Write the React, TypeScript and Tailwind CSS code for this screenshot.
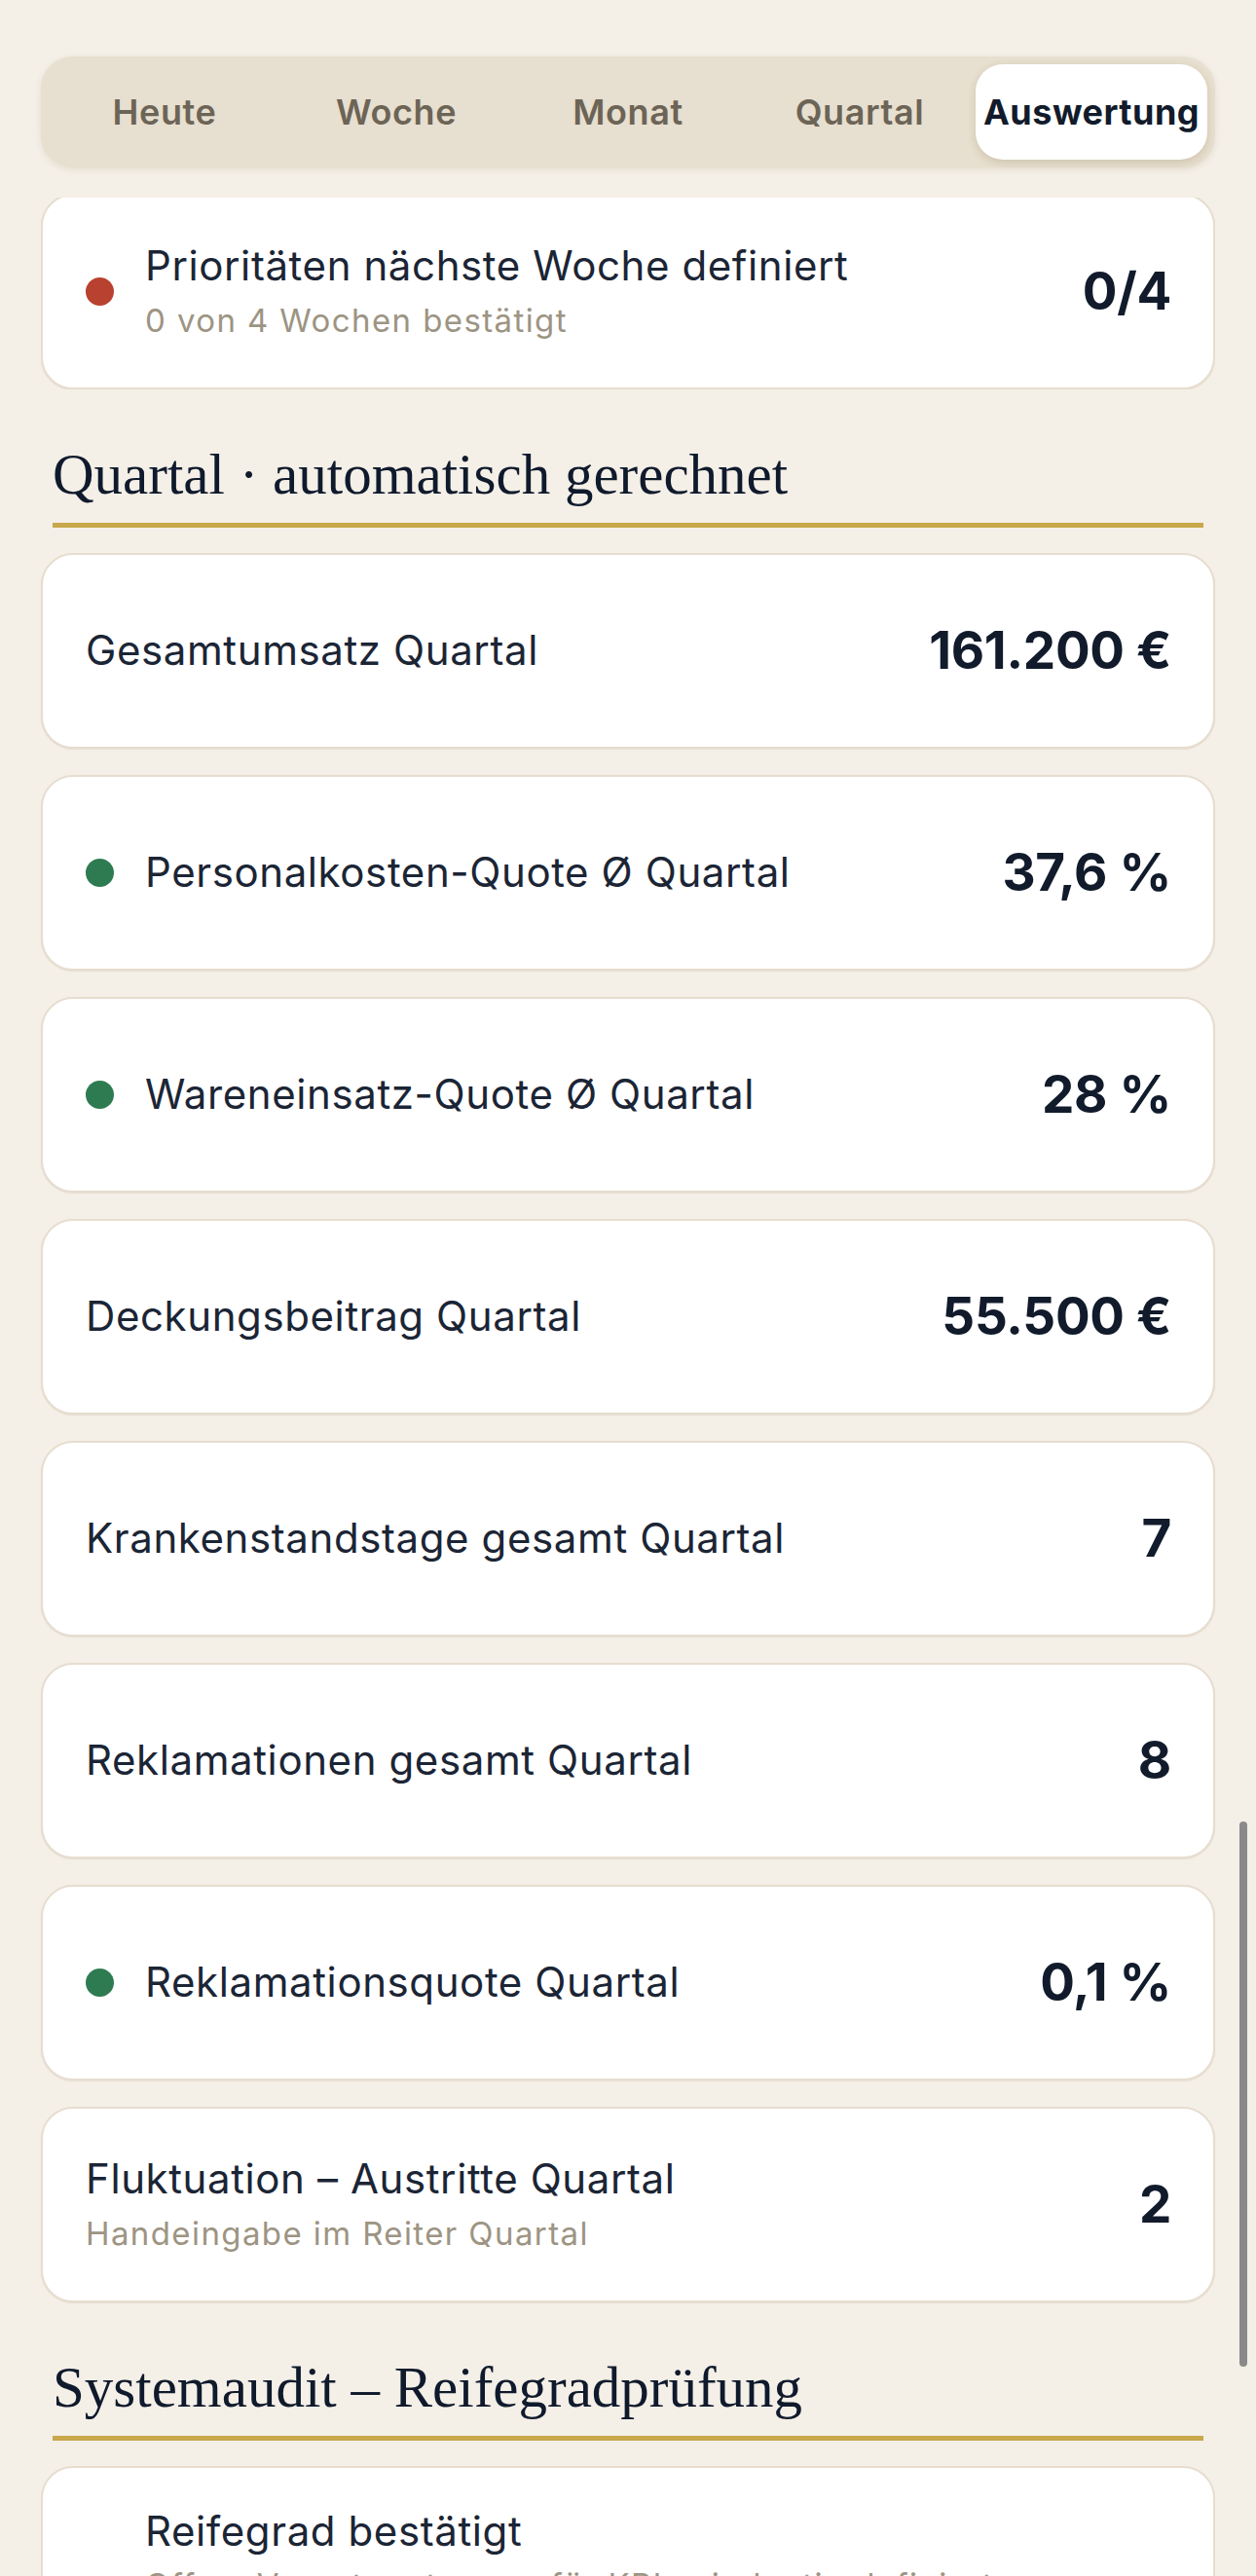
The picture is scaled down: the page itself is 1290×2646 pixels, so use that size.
import React from "react";

type Kpi = {
  label: string;
  value: string;
  hint?: string;
  status?: "good" | "bad";
};

const tabs = ["Heute", "Woche", "Monat", "Quartal", "Auswertung"];

const quarterKpis: Kpi[] = [
  { label: "Gesamtumsatz Quartal", value: "161.200 €" },
  { label: "Personalkosten-Quote Ø Quartal", value: "37,6 %", status: "good" },
  { label: "Wareneinsatz-Quote Ø Quartal", value: "28 %", status: "good" },
  { label: "Deckungsbeitrag Quartal", value: "55.500 €" },
  { label: "Krankenstandstage gesamt Quartal", value: "7" },
  { label: "Reklamationen gesamt Quartal", value: "8" },
  { label: "Reklamationsquote Quartal", value: "0,1 %", status: "good" },
  {
    label: "Fluktuation – Austritte Quartal",
    value: "2",
    hint: "Handeingabe im Reiter Quartal",
  },
];

const sans = "font-['Inter','Noto_Sans',sans-serif]";

function StatusDot({ status }: { status?: "good" | "bad" }) {
  if (!status) return null;
  return (
    <span
      className={
        status === "good"
          ? "h-[29px] w-[29px] shrink-0 rounded-full bg-[#2e7b52]"
          : "h-[29px] w-[29px] shrink-0 rounded-full bg-[#b9412f]"
      }
    />
  );
}

function KpiCard({ kpi }: { kpi: Kpi }) {
  return (
    <div className="flex min-h-[201px] items-center justify-between gap-6 rounded-[33px] border-2 border-[#e6ddcf] bg-white pl-[44px] pr-[43px] shadow-[0_1px_1px_rgba(170,150,110,0.18)]">
      <div className="flex items-center gap-[32px]">
        <StatusDot status={kpi.status} />
        <div>
          <p className="text-[42px] leading-[1.2] tracking-[0.6px] text-[#1b2535]">{kpi.label}</p>
          {kpi.hint && (
            <p className="mt-[9px] text-[33px] leading-[1.3] tracking-[1.4px] text-[#9d9483]">{kpi.hint}</p>
          )}
        </div>
      </div>
      <span className="text-[53px] font-bold leading-none tracking-[-0.3px] text-[#111b2b]">{kpi.value}</span>
    </div>
  );
}

function SectionHeading({ children }: { children: React.ReactNode }) {
  return (
    <div className="mx-[12px] mt-[57px] border-b-[5px] border-[#c9a74b] pb-[20px]">
      <h2 className="font-['Liberation_Serif','Times_New_Roman',serif] text-[59px] leading-[60px] text-[#0f1a2c]">
        {children}
      </h2>
    </div>
  );
}

export default function App() {
  return (
    <div className={`relative min-h-screen bg-[#f4efe7] ${sans}`}>
      <div className="px-[42px]">
        <header className="pb-[31px] pt-[58px]">
          <nav className="flex rounded-[33px] bg-[#e7dfcf] p-[8px] shadow-[0_2px_6px_rgba(140,115,70,0.14)]">
            {tabs.map((tab) => (
              <button
                key={tab}
                className={
                  tab === "Auswertung"
                    ? "flex h-[98px] flex-1 items-center justify-center rounded-[28px] bg-white text-[36px] font-bold tracking-[0.5px] text-[#111b2b] shadow-[0_3px_8px_rgba(110,85,40,0.2)]"
                    : "flex h-[98px] flex-1 items-center justify-center rounded-[28px] text-[36px] font-semibold tracking-[0.6px] text-[#6c6456]"
                }
              >
                {tab}
              </button>
            ))}
          </nav>
        </header>

        <div className="flex h-[197px] flex-col justify-end overflow-hidden">
          <KpiCard
            kpi={{
              label: "Prioritäten nächste Woche definiert",
              value: "0/4",
              hint: "0 von 4 Wochen bestätigt",
              status: "bad",
            }}
          />
        </div>

        <SectionHeading>Quartal · automatisch gerechnet</SectionHeading>

        <div className="mt-[26px] flex flex-col gap-[27px]">
          {quarterKpis.map((kpi) => (
            <KpiCard key={kpi.label} kpi={kpi} />
          ))}
        </div>

        <SectionHeading>Systemaudit – Reifegradprüfung</SectionHeading>

        <div className="mt-[26px] pb-[60px]">
          <div className="flex items-center gap-[32px] rounded-[33px] border-2 border-[#e6ddcf] bg-white pb-[40px] pl-[44px] pr-[43px] pt-[40px]">
            <span className="h-[29px] w-[29px] shrink-0 rounded-full bg-[#b9412f]" />
            <div>
              <p className="text-[42px] leading-[1.2] tracking-[0.6px] text-[#1b2535]">Reifegrad bestätigt</p>
              <p className="mt-[9px] text-[33px] leading-[1.3] tracking-[1.4px] text-[#9d9483]">
                Offen: Verantwortungen für KPIs eindeutig definiert
              </p>
              <p className="mt-[9px] text-[33px] leading-[1.3] tracking-[1.4px] text-[#9d9483]">
                Wird nach Abschluss des Quartals geprüft
              </p>
              <p className="mt-[9px] text-[33px] leading-[1.3] tracking-[1.4px] text-[#9d9483]">
                Bestätigung durch die Geschäftsführung
              </p>
            </div>
          </div>
        </div>
      </div>

      <div className="absolute right-[9px] top-[1871px] h-[560px] w-[8px] rounded-full bg-[#8a8a8a]" />
    </div>
  );
}
